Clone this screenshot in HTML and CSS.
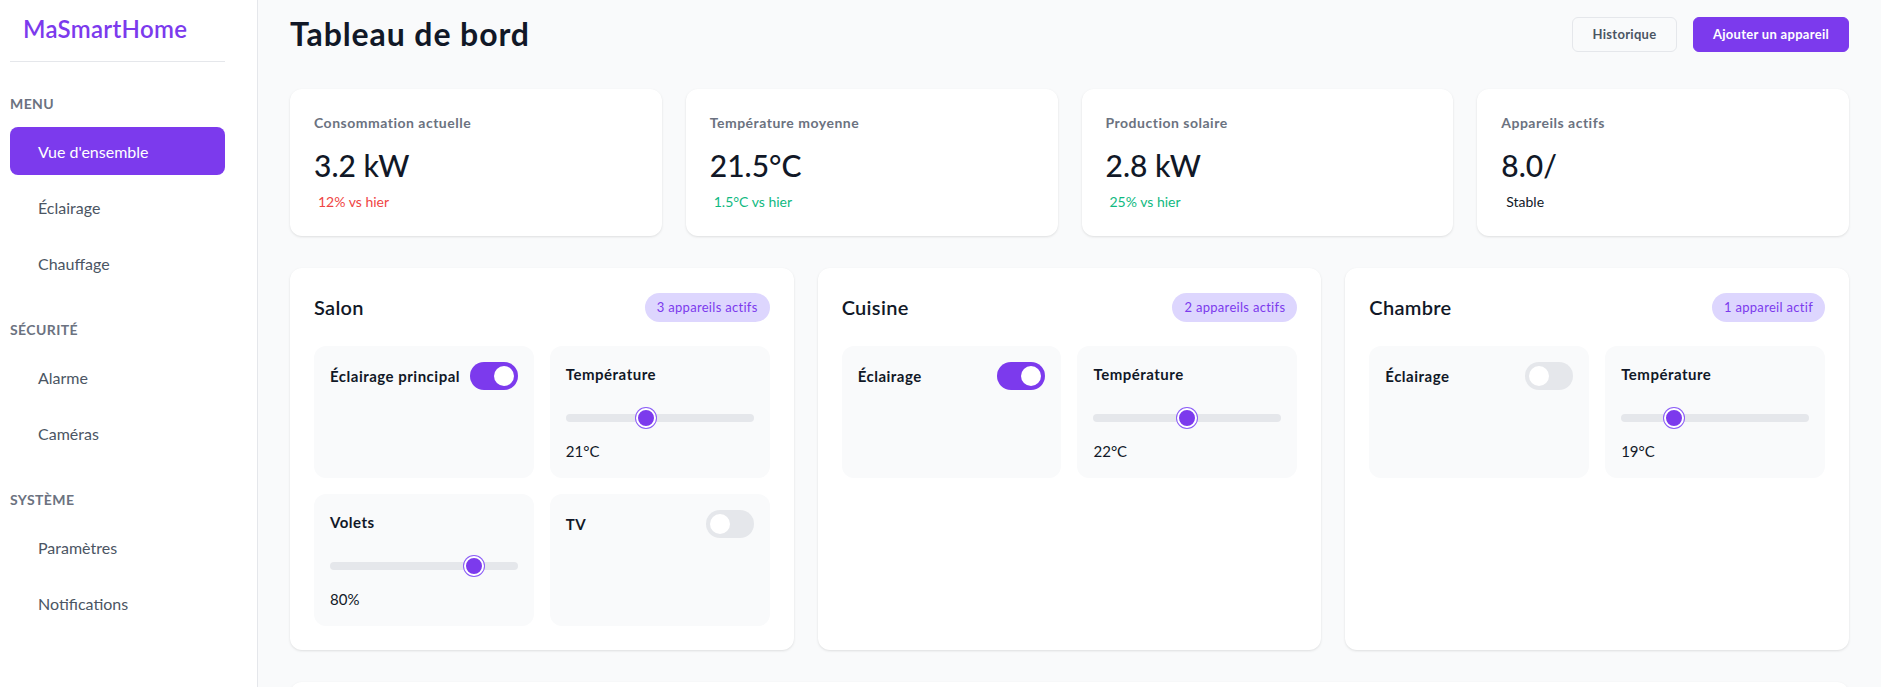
FILE: index.html
```html
<!DOCTYPE html>
<html lang="fr">
<head>
<meta charset="utf-8">
<title>MaSmartHome - Tableau de bord</title>
<link rel="stylesheet" href="styles.css">
</head>
<body>
<div class="app">
  <aside class="sidebar">
    <div class="logo">MaSmartHome</div>
    <nav class="nav">
      <div class="nav-section">
        <div class="nav-label">Menu</div>
        <a class="nav-item active">Vue d'ensemble</a>
        <a class="nav-item">Éclairage</a>
        <a class="nav-item">Chauffage</a>
      </div>
      <div class="nav-section">
        <div class="nav-label">Sécurité</div>
        <a class="nav-item">Alarme</a>
        <a class="nav-item">Caméras</a>
      </div>
      <div class="nav-section">
        <div class="nav-label">Système</div>
        <a class="nav-item">Paramètres</a>
        <a class="nav-item">Notifications</a>
      </div>
    </nav>
  </aside>

  <main class="main">
    <header class="page-header">
      <h1 class="page-title">Tableau de bord</h1>
      <div class="header-actions">
        <button class="btn btn-outline">Historique</button>
        <button class="btn btn-primary">Ajouter un appareil</button>
      </div>
    </header>

    <section class="stats">
      <div class="stat-card">
        <div class="stat-label">Consommation actuelle</div>
        <div class="stat-value">3.2 kW</div>
        <div class="stat-change down">12% vs hier</div>
      </div>
      <div class="stat-card">
        <div class="stat-label">Température moyenne</div>
        <div class="stat-value">21.5°C</div>
        <div class="stat-change up">1.5°C vs hier</div>
      </div>
      <div class="stat-card">
        <div class="stat-label">Production solaire</div>
        <div class="stat-value">2.8 kW</div>
        <div class="stat-change up">25% vs hier</div>
      </div>
      <div class="stat-card">
        <div class="stat-label">Appareils actifs</div>
        <div class="stat-value">8.0/</div>
        <div class="stat-change neutral">Stable</div>
      </div>
    </section>

    <section class="rooms">
      <div class="room-card">
        <div class="room-header">
          <h2 class="room-title">Salon</h2>
          <span class="badge">3 appareils actifs</span>
        </div>
        <div class="devices">
          <div class="device">
            <div class="device-head">
              <span class="device-name">Éclairage principal</span>
              <span class="toggle on"><span class="knob"></span></span>
            </div>
          </div>
          <div class="device">
            <div class="device-head"><span class="device-name">Température</span></div>
            <div class="slider"><div class="track"></div><div class="thumb" style="--p:0.417"></div></div>
            <div class="device-value">21°C</div>
          </div>
          <div class="device">
            <div class="device-head"><span class="device-name">Volets</span></div>
            <div class="slider"><div class="track"></div><div class="thumb" style="--p:0.8"></div></div>
            <div class="device-value">80%</div>
          </div>
          <div class="device">
            <div class="device-head">
              <span class="device-name">TV</span>
              <span class="toggle"><span class="knob"></span></span>
            </div>
          </div>
        </div>
      </div>

      <div class="room-card">
        <div class="room-header">
          <h2 class="room-title">Cuisine</h2>
          <span class="badge">2 appareils actifs</span>
        </div>
        <div class="devices">
          <div class="device">
            <div class="device-head">
              <span class="device-name">Éclairage</span>
              <span class="toggle on"><span class="knob"></span></span>
            </div>
          </div>
          <div class="device">
            <div class="device-head"><span class="device-name">Température</span></div>
            <div class="slider"><div class="track"></div><div class="thumb" style="--p:0.5"></div></div>
            <div class="device-value">22°C</div>
          </div>
        </div>
      </div>

      <div class="room-card">
        <div class="room-header">
          <h2 class="room-title">Chambre</h2>
          <span class="badge">1 appareil actif</span>
        </div>
        <div class="devices">
          <div class="device">
            <div class="device-head">
              <span class="device-name">Éclairage</span>
              <span class="toggle"><span class="knob"></span></span>
            </div>
          </div>
          <div class="device">
            <div class="device-head"><span class="device-name">Température</span></div>
            <div class="slider"><div class="track"></div><div class="thumb" style="--p:0.25"></div></div>
            <div class="device-value">19°C</div>
          </div>
        </div>
      </div>
    </section>

    <section class="panel"></section>
  </main>
</div>
</body>
</html>
```

FILE: styles.css
```css
* { box-sizing: border-box; }

html, body {
  margin: 0;
  padding: 0;
}

body {
  font-family: "Lato", "Noto Sans", "Liberation Sans", sans-serif;
  color: #111827;
  background: #f9fafb;
}

.app {
  display: flex;
  min-height: 100vh;
}

/* Sidebar */
.sidebar {
  width: 258px;
  flex: 0 0 258px;
  background: #ffffff;
  border-right: 1px solid #e5e7eb;
  padding: 0 32px 0 10px;
}

.logo {
  padding: 14px 13px 18px;
  font-size: 24px;
  line-height: 29px;
  font-weight: 600;
  letter-spacing: 0.3px;
  color: #7c3aed;
  border-bottom: 1px solid #e5e7eb;
}

.nav {
  margin-top: 32px;
}

.nav-section {
  padding-bottom: 25px;
}

.nav-label {
  font-size: 14px;
  line-height: 20px;
  font-weight: 700;
  letter-spacing: 0.4px;
  text-transform: uppercase;
  color: #6b7280;
  margin-bottom: 13px;
}

.nav-item {
  display: flex;
  align-items: center;
  height: 48px;
  padding-left: 28px;
  margin-bottom: 8px;
  border-radius: 8px;
  font-size: 16px;
  color: #4b5563;
  text-decoration: none;
}

.nav-item.active {
  background: #7c3aed;
  color: #ffffff;
}

/* Main */
.main {
  flex: 1;
  min-width: 0;
  padding: 16px 32px 32px;
  background: #f9fafb;
}

.page-header {
  display: flex;
  align-items: center;
  justify-content: space-between;
  height: 36px;
  margin-bottom: 37px;
}

.page-title {
  margin: 0;
  font-size: 32px;
  line-height: 36px;
  font-weight: 700;
  letter-spacing: 0.9px;
  color: #111827;
}

.header-actions {
  display: flex;
  gap: 16px;
}

.btn {
  height: 35px;
  padding: 0;
  border-radius: 6px;
  font-family: inherit;
  font-size: 13px;
  font-weight: 700;
  letter-spacing: 0.3px;
  cursor: pointer;
}

.btn-outline {
  background: #f9fafb;
  border: 1px solid #e5e7eb;
  color: #4b5563;
  width: 105px;
}

.btn-primary {
  background: #7c3aed;
  border: 1px solid #7c3aed;
  color: #ffffff;
  width: 156px;
}

/* Stat cards */
.stats {
  display: grid;
  grid-template-columns: repeat(4, 1fr);
  gap: 24px;
  margin-bottom: 32px;
}

.stat-card {
  background: #ffffff;
  border-radius: 12px;
  padding: 24px;
  height: 147px;
  box-shadow: 0 1px 3px rgba(0, 0, 0, 0.08), 0 1px 2px rgba(0, 0, 0, 0.04);
}

.stat-label {
  font-size: 14px;
  line-height: 20px;
  font-weight: 700;
  letter-spacing: 0.5px;
  color: #6b7280;
}

.stat-value {
  margin-top: 14px;
  font-size: 30px;
  line-height: 36px;
  font-weight: 500;
  color: #111827;
}

.stat-change {
  margin-top: 9px;
  padding-left: 4px;
  font-size: 14px;
  line-height: 20px;
}

.stat-change.down { color: #ef4444; }
.stat-change.up { color: #10b981; }
.stat-change.neutral { color: #111827; padding-left: 5px; }

/* Room cards */
.rooms {
  display: grid;
  grid-template-columns: repeat(3, 1fr);
  gap: 24px;
  margin-bottom: 32px;
}

.room-card {
  background: #ffffff;
  border-radius: 12px;
  padding: 24px;
  box-shadow: 0 1px 3px rgba(0, 0, 0, 0.08), 0 1px 2px rgba(0, 0, 0, 0.04);
}

.room-header {
  display: flex;
  align-items: center;
  justify-content: space-between;
  height: 30px;
  margin-bottom: 24px;
}

.room-title {
  margin: 0;
  font-size: 20px;
  line-height: 28px;
  font-weight: 600;
  letter-spacing: 0.3px;
  color: #111827;
}

.badge {
  display: inline-flex;
  align-items: center;
  height: 29px;
  padding: 0 12px;
  border-radius: 999px;
  background: #ddd6fe;
  color: #7c3aed;
  font-size: 13px;
  letter-spacing: 0.3px;
}

.devices {
  display: grid;
  grid-template-columns: 1fr 1fr;
  gap: 16px;
}

.device {
  background: #f9fafb;
  border-radius: 12px;
  padding: 16px;
  min-height: 131px;
}

.device-head {
  display: flex;
  align-items: center;
  justify-content: space-between;
  min-height: 24px;
  gap: 8px;
}

.device-name {
  font-size: 15px;
  line-height: 24px;
  font-weight: 700;
  letter-spacing: 0.5px;
  color: #111827;
}

.toggle {
  position: relative;
  flex: 0 0 48px;
  width: 48px;
  height: 28px;
  border-radius: 14px;
  background: #e5e7eb;
}

.toggle.on {
  background: #7c3aed;
}

.knob {
  position: absolute;
  top: 4px;
  left: 4px;
  width: 20px;
  height: 20px;
  border-radius: 50%;
  background: #ffffff;
}

.toggle.on .knob {
  left: 24px;
}

.slider {
  position: relative;
  margin-top: 20px;
  height: 24px;
  display: flex;
  align-items: center;
}

.track {
  width: 100%;
  height: 8px;
  border-radius: 4px;
  background: #e5e7eb;
}

.thumb {
  position: absolute;
  top: 50%;
  left: calc(11px + var(--p) * (100% - 22px));
  width: 20px;
  height: 20px;
  border-radius: 50%;
  background: #7c3aed;
  border: 2px solid #ffffff;
  box-shadow: 0 0 0 1px #8b5cf6;
  transform: translate(-50%, -50%);
}

.device-value {
  margin-top: 10px;
  font-size: 15px;
  line-height: 22px;
  color: #111827;
}

.panel {
  background: #ffffff;
  border-radius: 12px;
  height: 300px;
  box-shadow: 0 1px 3px rgba(0, 0, 0, 0.08), 0 1px 2px rgba(0, 0, 0, 0.04);
}
```
